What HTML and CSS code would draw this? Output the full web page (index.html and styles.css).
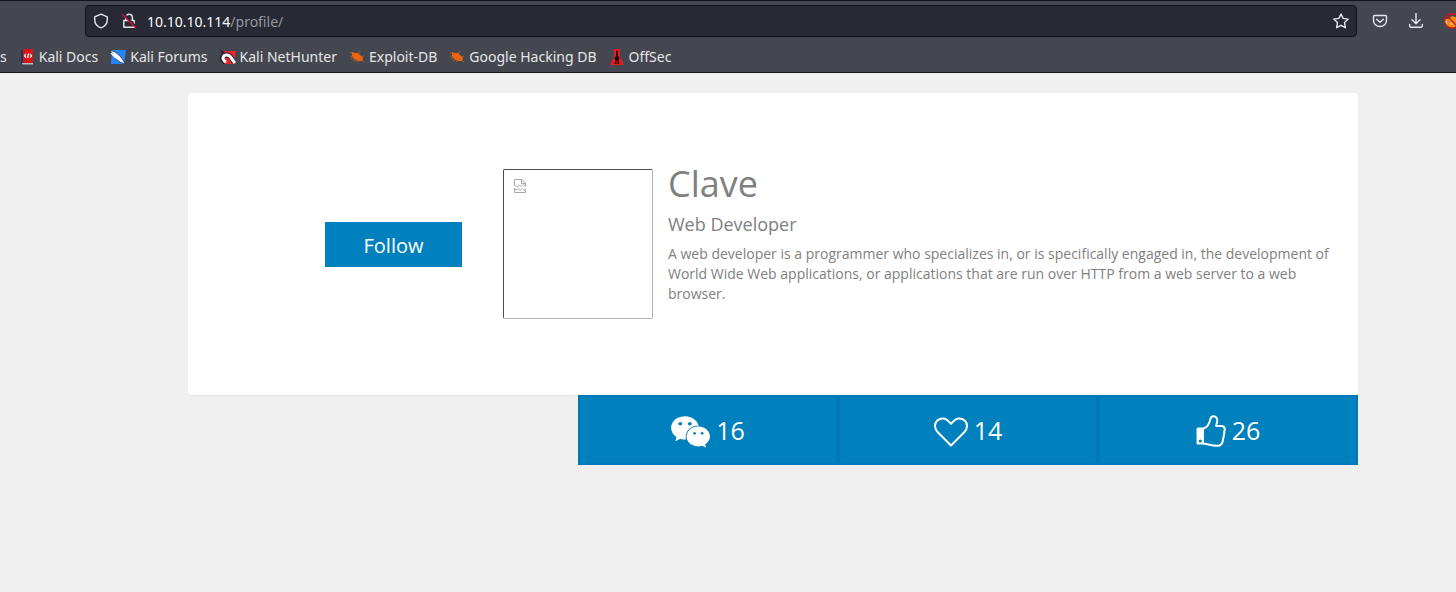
FILE: index.html
```html
<!DOCTYPE html>
<html lang="en">
<head>
<meta charset="utf-8">
<title>Profile</title>
<link rel="stylesheet" href="styles.css">
</head>
<body>
<header class="browser">
  <div class="toolbar">
    <div class="urlbar">
      <svg class="glyph" viewBox="0 0 16 16"><path d="M8 1.200 14.300 3.800V6.500C14.300 10.400 11.800 13.600 8 14.800 4.200 13.600 1.700 10.400 1.700 6.500V3.800Z"/></svg>
      <svg class="glyph lock" viewBox="0 0 16 16"><path d="M4.800 7V4.500a3.300 3.300 0 0 1 6.600 0V7M2.800 14.300V7.500H13.200V14.300Z"/><path class="gap" d="M3 1.500 14.700 13.200"/><path class="strike" d="M1.500 1.500 14.700 14.700"/></svg>
      <label class="address"><input type="text" value="10.10.10.114/profile/" aria-label="Address"><span class="shown" aria-hidden="true">10.10.10.114<span class="dim">/profile/</span></span></label>
      <button class="tool" aria-label="Bookmark"><svg class="glyph" viewBox="0 0 16 16"><path d="M8 1 10.100 5.400 15.200 6.100 11.500 9.600 12.400 14.700 8 12.300 3.600 14.700 4.500 9.600 .8 6.100 5.900 5.400Z"/></svg></button>
    </div>
    <nav class="actions">
      <button class="tool" aria-label="Save to Pocket"><svg class="glyph" viewBox="0 0 16 16"><path d="M2.500 2.500H13.500Q14.500 2.500 14.500 3.500V7.500A6.500 6 0 0 1 1.500 7.500V3.500Q1.500 2.500 2.500 2.500ZM4.700 6.300 8 9.300 11.300 6.300"/></svg></button>
      <button class="tool" aria-label="Downloads"><svg class="glyph" viewBox="0 0 16 16"><path d="M8 .5V10.500M4 6.800 8 10.700 12 6.800M1.700 11.500V13Q1.700 14.300 3 14.300H13Q14.300 14.300 14.300 13V11.500"/></svg></button>
      <button class="tool" aria-label="Proxy"><svg class="glyph" viewBox="0 0 16 16"><path class="fox" d="M1 6 4.500 6 8 3 15 5 15 11 10 15 5 14 1 10Z"/><path class="ear" d="M0 7 3 8 3 12 5 14 2 13ZM6 10 9 11 7 12Z"/><circle class="ban" cx="8" cy="8" r="7.200"/><path class="ban" d="M3 3 13 13"/></svg></button>
    </nav>
  </div>
  <nav class="bookmarks">
    <a class="cut" href="#">s</a>
    <a href="#"><svg viewBox="0 0 16 16"><path fill="#17335e" d="M2 1H5V16H2Z"/><path fill="#d91414" d="M4 0H14V14H4Z"/><path fill="#b8bcc5" d="M3 14H14V15.500H3Z"/><path fill="none" stroke="#fff" stroke-width="1.200" d="M7 5 5.500 6.700 7 8.500M11 5 12.500 6.700 11 8.500M9.600 4.500 8.500 9"/></svg>Kali Docs</a>
    <a href="#"><svg viewBox="0 0 16 16"><path fill="#2584fb" d="M2 1H16L14 15H1Z"/><path fill="#fff" stroke="#252b3a" stroke-width=".7" d="M0 1 5 3 10 7 13 11 15 15 10 13 6 10 4 7Z"/><path fill="none" stroke="#fff" stroke-width="1.500" d="M1 4 6 9M4 5 11 12"/></svg>Kali Forums</a>
    <a href="#"><svg viewBox="0 0 16 16"><path fill="#ee252d" d="M2 2H16L14 15H5Z"/><path fill="none" stroke="#20232a" stroke-width="5" d="M5 13C0 10 2 6 7 6 11 6 11 10 14 13"/><path fill="none" stroke="#fff" stroke-width="3" d="M6 13C1 10 3 6 7 6 11 6 11 10 15 14"/><path fill="#20232a" d="M0 1 5 3 2 5Z"/></svg>Kali NetHunter</a>
    <a href="#"><svg viewBox="0 0 16 16"><use href="#bug"/></svg>Exploit-DB</a>
    <a href="#"><svg viewBox="0 0 16 16"><g id="bug"><path fill="#f2640c" d="M3 3 6 4 9 4 12 7 14 9 13 12 9 12 5 10 3 7Z"/><path fill="none" stroke="#c85f22" stroke-width=".8" d="M1 7 5 8 2 10M4 12 8 10M7 13 10 10M11 2 9 6M15 7 12 8M15 13 11 10M1 3 5 6"/></g></svg>Google Hacking DB</a>
    <a href="#"><svg viewBox="0 0 16 16"><path fill="#e31b23" d="M5 0H11V8L15 16H1L5 8Z"/><path fill="#26070b" d="M7 3 8 1 9 3V7L10.500 9 9.500 12 10.500 15H8.500V12H7.500V15H5.500L6.500 12 5.500 9 7 7Z"/></svg>OffSec</a>
  </nav>
</header>
<main class="page">
  <section class="card">
    <div class="side"><button class="follow">Follow</button></div>
    <div class="photo" role="img" aria-label="Profile photo">
      <svg viewBox="0 0 12 14"><path d="M.5 6V.5H8L11.500 4V7M7.500 .5V4.500H11.500M.5 6.500H2L3.500 8 5.500 6 7 7.500 9 5.500 11.500 7.500M.5 9V13.500H11.500V10M.5 9.500 2.500 11 4 9.500 6 11.500 8 9.500 10 11.500 11.500 10.500"/></svg>
    </div>
    <div class="bio">
      <h1>Clave</h1>
      <h2>Web Developer</h2>
      <p>A web developer is a programmer who specializes in, or is specifically engaged in, the development of World Wide Web applications, or applications that are run over HTTP from a web server to a web browser.</p>
    </div>
  </section>
  <section class="stats">
    <a class="stat" href="#"><svg class="chat" viewBox="0 0 2048 1792"><path d="M580 461q0-41-25-66t-66-25q-43 0-76 25.500t-33 65.500q0 39 33 64.500t76 25.500q41 0 66-24.500t25-65.500zm743 507q0-28-25.500-50t-65.500-22q-27 0-49.500 22.500t-22.500 49.500q0 28 22.500 50.500t49.500 22.500q40 0 65.500-22t25.500-51zm-236-507q0-41-24.500-66t-65.500-25q-43 0-76 25.500t-33 65.500q0 39 33 64.500t76 25.500q41 0 65.500-24.500t24.500-65.500zm635 507q0-28-26-50t-65-22q-27 0-49.500 22.500t-22.500 49.500q0 28 22.500 50.500t49.500 22.500q39 0 65-22t26-51zm-266-397q-31-4-70-4-169 0-311 77t-223.500 208.500-81.500 287.500q0 78 23 152-35 3-68 3-26 0-50-1.500t-55-6.500-44.500-7-54.500-10.500-50-10.500l-253 127 72-218q-290-203-290-490 0-169 97.500-311t264-223.500 363.500-81.500q176 0 332.500 66t262 182.500 136.500 260.500zm592 561q0 117-68.500 223.500t-185.500 193.500l55 181-199-109q-150 37-218 37-169 0-311-70.500t-223.500-191.500-81.500-264 81.500-264 223.500-191.500 311-70.500q161 0 303 70.500t227.500 192 85.500 263.500z"/></svg>16</a>
    <a class="stat" href="#"><svg class="heart" viewBox="0 0 34 30"><path d="M17 28.500 3.800 15.300C1.800 13.200 1 11.300 1 9 1 4.500 4.500 1.500 9 1.500 12.500 1.500 14.500 4 17 6.800 19.500 4 21.500 1.500 25 1.500 29.500 1.500 33 4.500 33 9 33 11.300 32.200 13.200 30.200 15.300Z"/></svg>14</a>
    <a class="stat" href="#"><svg class="thumb" viewBox="0 0 30 32"><path class="cuff" fill-rule="evenodd" d="M2 12.500H8V29.500H2Q.5 29.500 .5 28V14Q.5 12.500 2 12.500ZM4.300 24.400A1.600 1.600 0 1 0 4.300 27.600 1.600 1.600 0 1 0 4.300 24.400Z"/><path d="M7.500 13.500C11 12.800 13.500 8 14.400 4 14.900 2 16 1.300 17.500 1.300 20.300 1.300 21.600 3.700 21.200 6.500 20.900 8.500 19.700 10.500 20.200 11H25.800C28.200 11.400 29 13.200 28.700 15 28.500 16 28 16.400 28.300 17.500 28.300 19 27.600 20 27.700 21.500 27.600 23 26.800 24 26.900 25.500 26.700 28 25.400 29.500 23.500 30.500 20.500 31.300 16.500 30.500 12.500 29.500 11 28.900 9.500 28.700 7.500 28.700"/></svg>26</a>
  </section>
</main>
</body>
</html>
```

FILE: styles.css
```css
* { box-sizing: border-box; }
body {
  margin: 0;
  background: #f0f0f0;
  color: #808080;
  font: 14px/20px "Open Sans", sans-serif;
}
a { color: inherit; text-decoration: none; }
button { font: inherit; border: 0; padding: 0; }

.browser {
  background: #44474f;
  color: #e6e6e8;
  border-top: 1px solid #14151a;
  border-bottom: 1px solid #14151a;
  overflow: hidden;
}
.toolbar {
  display: flex;
  align-items: center;
  height: 40px;
  padding-left: 85px;
}
.urlbar {
  display: flex;
  flex: 1;
  align-items: center;
  gap: 12px;
  height: 32px;
  padding: 0 7px;
  border: 1px solid #111218;
  border-radius: 4px;
  background: #272935;
}
.glyph {
  display: block;
  flex: none;
  width: 16px;
  height: 16px;
  fill: none;
  stroke: #e8e8ec;
  stroke-width: 1.4;
  stroke-linejoin: round;
  stroke-linecap: round;
}
.glyph .gap { stroke: #272935; stroke-width: 2; }
.glyph .strike { stroke: #d70f46; }
.glyph .fox { fill: #f08a12; stroke: none; }
.glyph .ear { fill: #e8e8ec; stroke: none; }
.glyph .ban { stroke: #cf1518; }
.address {
  display: grid;
  flex: 1;
  align-items: center;
  margin-left: -2px;
  padding-top: 2px;
  color: #fbfbfe;
  font: 14px/20px "Noto Sans", sans-serif;
}
.address input, .address .shown { grid-area: 1 / 1; }
.address input {
  width: 100%;
  padding: 0;
  border: 0;
  background: none;
  color: transparent;
  font: inherit;
}
.address .shown { pointer-events: none; }
.address .dim { color: #96979f; }
.tool { background: none; }
.actions {
  display: flex;
  flex: none;
  gap: 20px;
  width: 99px;
  padding-left: 15px;
}
.bookmarks {
  display: flex;
  align-items: center;
  gap: 12px;
  height: 31px;
  font: 14px/20px "Noto Sans", sans-serif;
  white-space: nowrap;
}
.bookmarks a { display: flex; align-items: center; gap: 4px; }
.bookmarks svg { width: 16px; height: 16px; }

.page { padding: 20px 98px 20px 188px; }
.card {
  display: flex;
  align-items: center;
  padding: 64px 16px 64px 0;
  min-height: 302px;
  border-radius: 4px;
  background: #fff;
  box-shadow: 0 1px 1px #e6e6e6;
}
.side {
  display: flex;
  justify-content: flex-end;
  width: 274px;
}
.follow {
  width: 137px;
  height: 45px;
  padding-top: 3px;
  background: #0080bd;
  color: #fff;
  font-size: 20px;
}
.photo {
  flex: none;
  width: 150px;
  height: 150px;
  margin: 0 15px 0 41px;
  padding: 9px 10px;
  border: 1px solid;
  border-color: #4c4c4c #b2b2b2 #b2b2b2 #4c4c4c;
  border-radius: 2px;
}
.photo svg { display: block; width: 12px; height: 14px; fill: none; stroke: #a8a8a8; }
.bio { flex: 1; align-self: stretch; padding-top: 7px; }
.bio h1, .bio h2, .bio p { margin: 0; font-weight: 400; }
.bio h1 { font-size: 36px; line-height: 40px; }
.bio h2 { padding: 10px 0; font-size: 18px; line-height: 20px; }

.stats {
  display: grid;
  grid-template-columns: repeat(3, 1fr);
  width: 66.667%;
  margin-left: auto;
}
.stat {
  display: flex;
  align-items: center;
  justify-content: center;
  gap: 6px;
  height: 70px;
  border: 2px solid #0078b5;
  background: #0080bd;
  color: #fff;
  font-size: 25px;
  line-height: 36px;
}
.stat svg { fill: #fff; margin-top: 3px; }
.chat { width: 39px; height: 34px; }
.heart { width: 34px; height: 30px; }
.stat .thumb { width: 30px; height: 32px; margin-top: 2px; }
.heart path, .thumb path { fill: none; stroke: #fff; stroke-width: 2; stroke-linejoin: round; }
.thumb .cuff { fill: #fff; stroke: none; }
```
